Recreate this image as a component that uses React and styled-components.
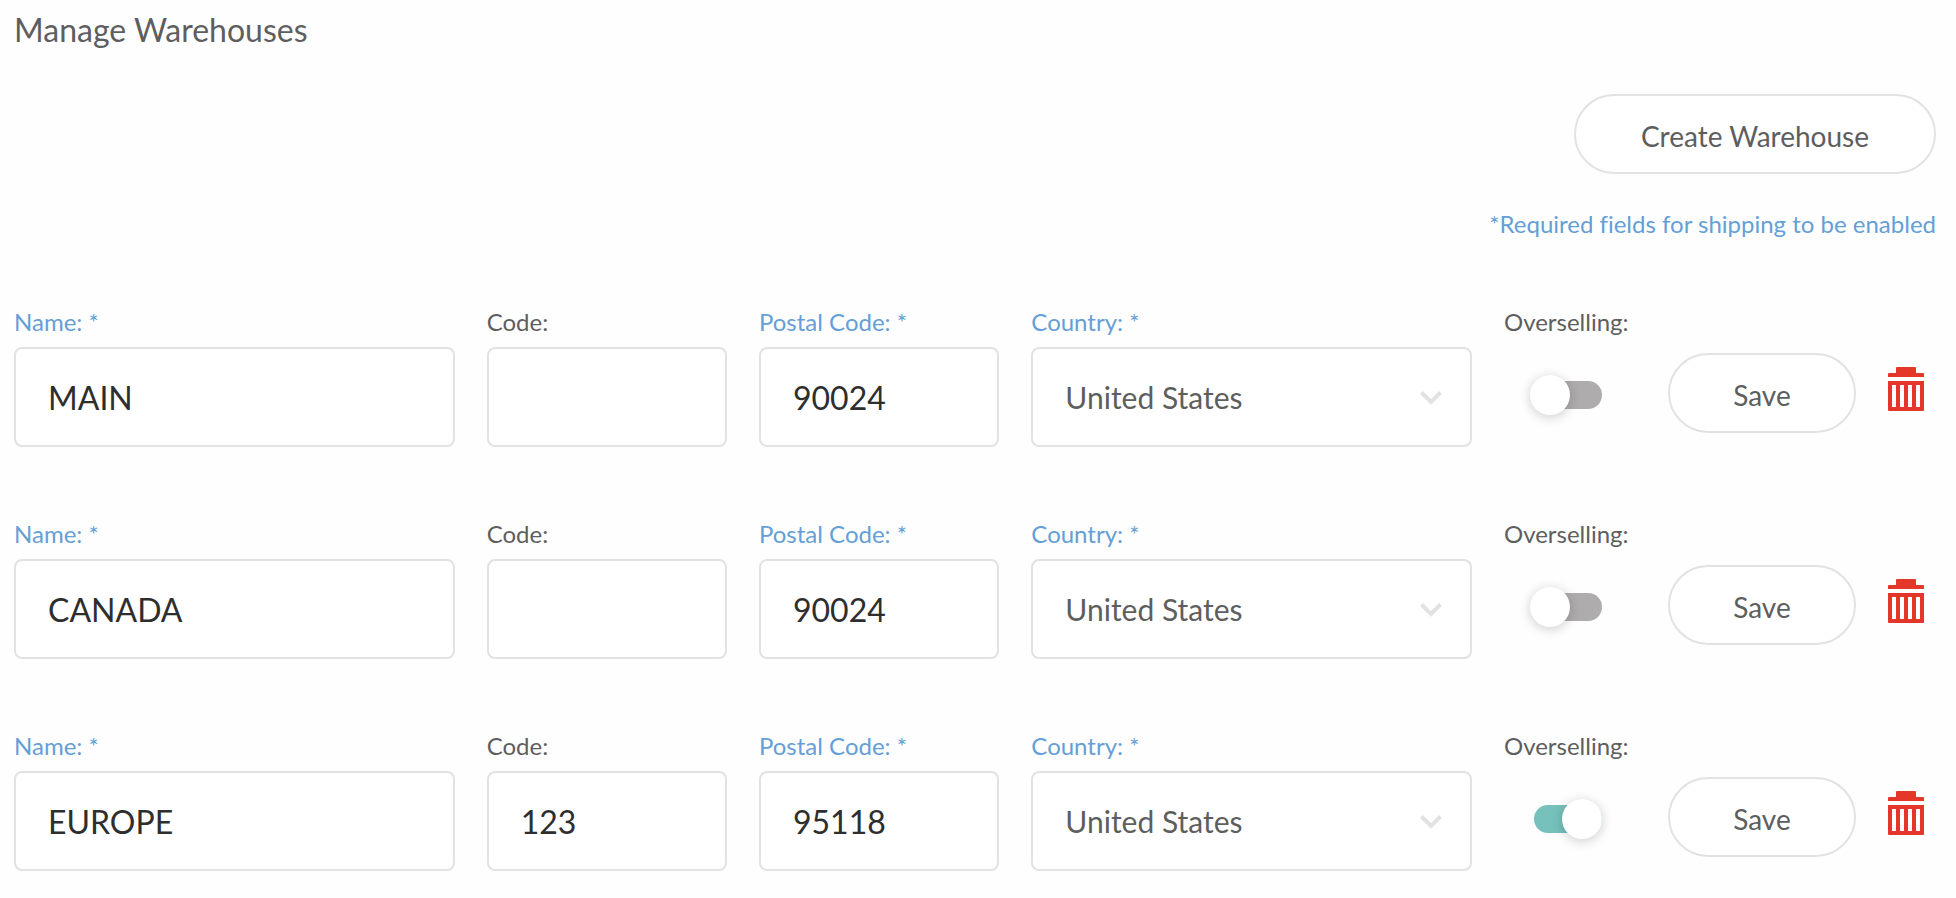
import React, { useState } from 'react'
import styled, { createGlobalStyle } from 'styled-components'

const GlobalStyle = createGlobalStyle`
  *, *::before, *::after {
    box-sizing:border-box;
  }
  body {
    margin:0;
    background:#fefefe;
    color:#5e5e5e;
    font-family:Lato, sans-serif;
    font-variant-ligatures:none;
  }
`

const Page = styled.main`
  padding:10px 20px 24px 14px;
`

const Title = styled.h1`
  margin:0;
  font-size:32px;
  line-height:40px;
  font-weight:400;
`

const Actions = styled.div`
  display:flex;
  flex-direction:column;
  align-items:flex-end;
  gap:36px;
  margin:44px 0 70px;
`

const Button = styled.button`
  height:80px;
  min-width:${({ $wide }) => $wide ? '362px' : '188px'};
  padding:4px 32px 0;
  border:2px solid #e2e2e2;
  border-radius:40px;
  background:#fff;
  color:inherit;
  font-family:inherit;
  font-size:28px;
  line-height:36px;
  cursor:pointer;

  &:hover{
    border-color:#c4c4c4;
  }
`

const Note = styled.p`
  margin:0;
  font-size:24px;
  line-height:28px;
  color:#659fd6;
`

const List = styled.div`
  display:flex;
  flex-direction:column;
  gap:73px;
`

const Row = styled.form`
  display:grid;
  grid-template-columns:minmax(0, 11fr) minmax(0, 6fr) minmax(0, 6fr) minmax(0, 11fr) 132px 188px 48px;
  column-gap:32px;
`

const Field = styled.div`
  display:flex;
  flex-direction:column;
  gap:11px;
`

const Label = styled.label`
  font-size:24px;
  line-height:28px;
  white-space:nowrap;
  color:${({ $required }) => $required ? '#659fd6' : 'inherit'};
`

const TextInput = styled.input`
  width:100%;
  height:100px;
  padding:0 32px;
  border:2px solid #e2e2e2;
  border-radius:8px;
  background:#fff;
  color:#2e2e2e;
  font-family:inherit;
  font-size:32px;
  outline:none;

  &:focus{
    border-color:#659fd6;
  }
`

const SelectWrap = styled.div`
  position:relative;
`

const Select = styled.select`
  appearance:none;
  width:100%;
  height:100px;
  padding:0 64px 0 32px;
  border:2px solid #e2e2e2;
  border-radius:8px;
  background:#fff;
  color:inherit;
  font-family:inherit;
  font-size:30px;
  outline:none;

  &:focus{
    border-color:#659fd6;
  }
`

const Chevron = styled.svg`
  position:absolute;
  right:29px;
  top:43px;
  width:24px;
  height:16px;
  pointer-events:none;
`

const ToggleSlot = styled.div`
  padding:28px 0 0 26px;
`

const Toggle = styled.input`
  appearance:none;
  display:block;
  position:relative;
  width:72px;
  height:40px;
  margin:0;
  cursor:pointer;

  &::before{
    content:'';
    position:absolute;
    top:6px;
    left:4px;
    width:68px;
    height:28px;
    border-radius:14px;
    background:#aeacad;
  }

  &::after{
    content:'';
    position:absolute;
    top:0;
    left:0;
    width:40px;
    height:40px;
    border-radius:50%;
    background:#fff;
    box-shadow:0 2px 12px rgba(0, 0, 0, 0.2);
  }

  &:checked::before{
    background:#76c1bc;
  }

  &:checked::after{
    left:32px;
  }
`

const SaveSlot = styled.div`
  padding-top:45px;
`

const DeleteButton = styled.button`
  align-self:start;
  justify-self:start;
  margin-top:59px;
  padding:0;
  border:none;
  background:none;
  cursor:pointer;
`

const TrashSvg = styled.svg`
  display:block;
  width:36px;
  height:44px;
`

const countries = ['United States', 'Canada', 'United Kingdom']

const initialWarehouses = [
  { id: 1, name: 'MAIN', code: '', postal: '90024', country: 'United States', overselling: false },
  { id: 2, name: 'CANADA', code: '', postal: '90024', country: 'United States', overselling: false },
  { id: 3, name: 'EUROPE', code: '123', postal: '95118', country: 'United States', overselling: true },
]

const TrashIcon = () => (
  <TrashSvg viewBox="0 0 36 44" fill="#e43629" aria-hidden="true">
    <path d="M9 0h18a1 1 0 0 1 1 1v5h7a1 1 0 0 1 1 1v3H0V7a1 1 0 0 1 1-1h7V1a1 1 0 0 1 1-1z" />
    <path fillRule="evenodd" d="M0 14h36v29a1 1 0 0 1-1 1H1a1 1 0 0 1-1-1zM4 18v22h4V18zM12 18v22h4V18zM20 18v22h4V18zM28 18v22h4V18z" />
  </TrashSvg>
)

const Warehouse = ({ warehouse, onChange, onDelete }) => {
  const { id, name, code, postal, country, overselling } = warehouse

  return (
    <Row onSubmit={e => e.preventDefault()}>
      <Field>
        <Label $required htmlFor={`name-${id}`}>Name: *</Label>
        <TextInput id={`name-${id}`} value={name} onChange={e => onChange({ name: e.target.value })} />
      </Field>
      <Field>
        <Label htmlFor={`code-${id}`}>Code:</Label>
        <TextInput id={`code-${id}`} value={code} onChange={e => onChange({ code: e.target.value })} />
      </Field>
      <Field>
        <Label $required htmlFor={`postal-${id}`}>Postal Code: *</Label>
        <TextInput id={`postal-${id}`} value={postal} onChange={e => onChange({ postal: e.target.value })} />
      </Field>
      <Field>
        <Label $required htmlFor={`country-${id}`}>Country: *</Label>
        <SelectWrap>
          <Select id={`country-${id}`} value={country} onChange={e => onChange({ country: e.target.value })}>
            {countries.map(c => <option key={c}>{c}</option>)}
          </Select>
          <Chevron viewBox="0 0 24 16" fill="none" stroke="#e2e2e2" strokeWidth="4" aria-hidden="true">
            <path d="M2.500 2.500L12 12l9.500-9.500" />
          </Chevron>
        </SelectWrap>
      </Field>
      <Field>
        <Label htmlFor={`overselling-${id}`}>Overselling:</Label>
        <ToggleSlot>
          <Toggle
            id={`overselling-${id}`}
            type="checkbox"
            checked={overselling}
            onChange={e => onChange({ overselling: e.target.checked })}
          />
        </ToggleSlot>
      </Field>
      <SaveSlot>
        <Button type="submit">Save</Button>
      </SaveSlot>
      <DeleteButton type="button" aria-label="Delete" onClick={onDelete}>
        <TrashIcon />
      </DeleteButton>
    </Row>
  )
}

const App = () => {
  const [warehouses, setWarehouses] = useState(initialWarehouses)

  const handleCreate = () => {
    setWarehouses([
      ...warehouses,
      { id: Date.now(), name: '', code: '', postal: '', country: 'United States', overselling: false },
    ])
  }

  const handleChange = (id, changes) => {
    setWarehouses(warehouses.map(w => w.id === id ? { ...w, ...changes } : w))
  }

  const handleDelete = (id) => {
    setWarehouses(warehouses.filter(w => w.id !== id))
  }

  return (
    <>
      <GlobalStyle />
      <Page>
        <Title>Manage Warehouses</Title>
        <Actions>
          <Button type="button" $wide onClick={handleCreate}>Create Warehouse</Button>
          <Note>*Required fields for shipping to be enabled</Note>
        </Actions>
        <List>
          {warehouses.map(w => (
            <Warehouse
              key={w.id}
              warehouse={w}
              onChange={changes => handleChange(w.id, changes)}
              onDelete={() => handleDelete(w.id)}
            />
          ))}
        </List>
      </Page>
    </>
  )
}

export default App
